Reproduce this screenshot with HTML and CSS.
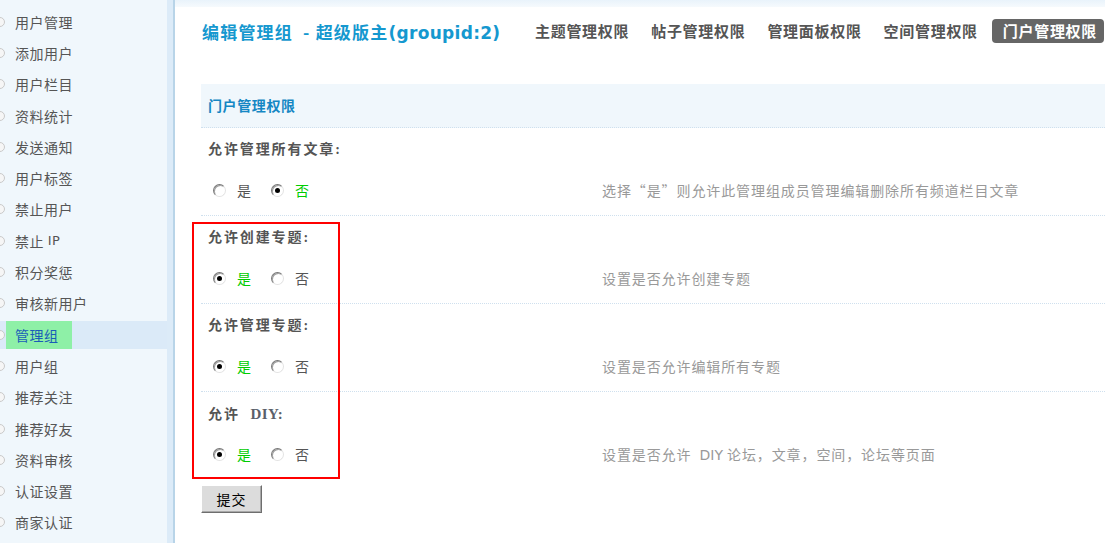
FILE: index.html
```html
<!DOCTYPE html>
<html lang="zh-CN">
<head>
<meta charset="utf-8">
<title>编辑管理组</title>
<link rel="stylesheet" href="styles.css">
</head>
<body>
<div class="page">
  <aside class="sidebar">
    <ul class="menu">
      <li class="item"><a class="link"><span class="label">用户管理</span></a></li>
      <li class="item"><a class="link"><span class="label">添加用户</span></a></li>
      <li class="item"><a class="link"><span class="label">用户栏目</span></a></li>
      <li class="item"><a class="link"><span class="label">资料统计</span></a></li>
      <li class="item"><a class="link"><span class="label">发送通知</span></a></li>
      <li class="item"><a class="link"><span class="label">用户标签</span></a></li>
      <li class="item"><a class="link"><span class="label">禁止用户</span></a></li>
      <li class="item"><a class="link"><span class="label">禁止 <span class="lat">IP</span></span></a></li>
      <li class="item"><a class="link"><span class="label">积分奖惩</span></a></li>
      <li class="item"><a class="link"><span class="label">审核新用户</span></a></li>
      <li class="item active"><a class="link"><span class="label">管理组</span></a></li>
      <li class="item"><a class="link"><span class="label">用户组</span></a></li>
      <li class="item"><a class="link"><span class="label">推荐关注</span></a></li>
      <li class="item"><a class="link"><span class="label">推荐好友</span></a></li>
      <li class="item"><a class="link"><span class="label">资料审核</span></a></li>
      <li class="item"><a class="link"><span class="label">认证设置</span></a></li>
      <li class="item"><a class="link"><span class="label">商家认证</span></a></li>
    </ul>
  </aside>
  <div class="edge"></div>
  <main class="main">
    <div class="topstrip"></div>
    <div class="content">
      <header class="header">
        <h1 class="title">编辑管理组 &nbsp;-&nbsp;超级版主<span class="gid">(groupid:2)</span></h1>
        <nav class="tabs">
          <span class="tab">主题管理权限</span>
          <span class="tab">帖子管理权限</span>
          <span class="tab">管理面板权限</span>
          <span class="tab">空间管理权限</span>
          <span class="tab current">门户管理权限</span>
        </nav>
      </header>

      <div class="section-head">门户管理权限</div>

      <form class="form">
        <div class="setting">
          <div class="setting-label">允许管理所有文章:</div>
          <div class="setting-row">
            <div class="choices">
              <span class="choice"><span class="radio"></span><span class="opt">是</span></span>
              <span class="choice"><span class="radio checked"></span><span class="opt on">否</span></span>
            </div>
            <div class="desc">选择“是”则允许此管理组成员管理编辑删除所有频道栏目文章</div>
          </div>
        </div>
        <div class="setting">
          <div class="setting-label">允许创建专题:</div>
          <div class="setting-row">
            <div class="choices">
              <span class="choice"><span class="radio checked"></span><span class="opt on">是</span></span>
              <span class="choice"><span class="radio"></span><span class="opt">否</span></span>
            </div>
            <div class="desc">设置是否允许创建专题</div>
          </div>
        </div>
        <div class="setting">
          <div class="setting-label">允许管理专题:</div>
          <div class="setting-row">
            <div class="choices">
              <span class="choice"><span class="radio checked"></span><span class="opt on">是</span></span>
              <span class="choice"><span class="radio"></span><span class="opt">否</span></span>
            </div>
            <div class="desc">设置是否允许编辑所有专题</div>
          </div>
        </div>
        <div class="setting last">
          <div class="setting-label">允许 &nbsp;<span class="tight">DIY:</span></div>
          <div class="setting-row">
            <div class="choices">
              <span class="choice"><span class="radio checked"></span><span class="opt on">是</span></span>
              <span class="choice"><span class="radio"></span><span class="opt">否</span></span>
            </div>
            <div class="desc">设置是否允许 &nbsp;<span class="lat">DIY</span> 论坛，文章，空间，论坛等页面</div>
          </div>
        </div>
        <div class="highlight-box"></div>
        <button type="button" class="submit">提交</button>
      </form>
    </div>
  </main>
</div>
</body>
</html>
```

FILE: styles.css
```css
* { box-sizing: border-box; }
html, body {
  margin: 0;
  padding: 0;
  background: #fff;
  font-family: "Noto Sans CJK SC", "DejaVu Sans", sans-serif;
  font-size: 14px;
  color: #555;
  overflow: hidden;
}
.page {
  display: flex;
  width: 1105px;
  height: 543px;
}

/* Sidebar */
.sidebar {
  width: 167px;
  flex: none;
  background: #f0f7fc;
  padding-top: 6px;
}
.menu {
  list-style: none;
  margin: 0;
  padding: 0;
}
.item {
  height: 31.3px;
  display: flex;
  align-items: center;
}
.link {
  display: flex;
  align-items: center;
  width: 100%;
  height: 28px;
  color: #555;
}
.link::before {
  content: "";
  flex: none;
  width: 8px;
  height: 8px;
  margin-left: -5px;
  border: 1px solid #c9c9c9;
  border-radius: 50%;
  background: #f6f6f6;
}
.label {
  display: flex;
  align-items: center;
  height: 28px;
  margin-left: 1px;
  padding: 0 13px 0 9px;
  letter-spacing: 0.5px;
  white-space: pre;
}
.lat { font-family: "DejaVu Sans", sans-serif; font-size: 13px; }
.item.active .link { background: #dbeaf8; }
.item.active .label {
  background: #8ef0a7;
  color: #1a5cb8;
}

.edge {
  width: 8px;
  flex: none;
  background: #dcebf8;
  border-right: 2px solid #b8d4e8;
}

/* Main */
.main {
  flex: 1;
  min-width: 0;
}
.topstrip {
  height: 7px;
  background: linear-gradient(#e9f3fb, #f6fafd);
}
.content {
  padding-left: 26px;
}
.header {
  display: flex;
  align-items: center;
  height: 24px;
  margin-top: 12px;
  margin-bottom: 41px;
}
.title {
  margin: 0;
  font-size: 17px;
  font-weight: bold;
  color: #1598cf;
  letter-spacing: 1.2px;
  white-space: nowrap;
  padding-left: 1px;
}
.gid {
  font-family: "DejaVu Sans", sans-serif;
  letter-spacing: 0.3px;
}
.tabs {
  display: flex;
  align-items: center;
  margin-left: auto;
  margin-right: 1px;
}
.tab {
  font-size: 15px;
  font-weight: bold;
  letter-spacing: 0.7px;
  color: #555;
  margin-left: 22px;
  line-height: 24px;
  white-space: nowrap;
}
.tab.current {
  background: #666;
  color: #fff;
  border-radius: 4px;
  padding: 0 7px 0 11px;
  margin-left: 14px;
}

.section-head {
  height: 44px;
  line-height: 43px;
  background: #f0f7fc;
  border-bottom: 1px dotted #cfe0ee;
  padding-left: 7px;
  font-size: 14px;
  font-weight: bold;
  color: #1587c4;
  letter-spacing: 0.6px;
}

.form {
  position: relative;
}
.setting {
  border-bottom: 1px dotted #cfe0ee;
}
.setting.last { border-bottom: none; }
.setting-label {
  height: 44px;
  line-height: 44px;
  padding-left: 7px;
  font-family: "Liberation Serif", "Noto Sans CJK SC", serif;
  font-weight: bold;
  font-size: 14px;
  color: #555;
  letter-spacing: 1.9px;
  white-space: pre;
}
.tight {
  font-size: 15px;
  letter-spacing: 0.3px;
  color: #5a5f6a;
}
.setting-row {
  display: flex;
  height: 43px;
  padding-top: 8px;
  line-height: 20px;
}
.choices {
  width: 401px;
  flex: none;
  display: flex;
  align-items: center;
  height: 20px;
  padding-left: 12px;
}
.choice {
  display: flex;
  align-items: center;
  width: 58px;
}
.radio {
  width: 13px;
  height: 13px;
  border-radius: 50%;
  background: #fff;
  border: 1px solid;
  border-color: #777 #e3e3e3 #e3e3e3 #777;
  box-shadow: inset 1px 1px 0 #a0a0a0;
  position: relative;
  flex: none;
}
.radio.checked::after {
  content: "";
  position: absolute;
  left: 3px;
  top: 3px;
  width: 5px;
  height: 5px;
  border-radius: 50%;
  background: #000;
}
.opt {
  margin-left: 11px;
  color: #555;
}
.opt.on { color: #00cc00; }
.desc {
  color: #999;
  letter-spacing: 0.9px;
  white-space: pre;
}
.desc .lat { font-size: 14px; letter-spacing: 0; }

.highlight-box {
  position: absolute;
  left: -9px;
  top: 94px;
  width: 148px;
  height: 257px;
  border: 2px solid #ff0000;
  pointer-events: none;
}

.submit {
  display: block;
  margin-top: 6px;
  width: 61px;
  height: 28px;
  padding: 0;
  background: #dcdcdc;
  border: 1px solid;
  border-color: #fff #6e6e6e #6e6e6e #fff;
  box-shadow: inset -1px -1px 0 #a8a8a8;
  font-family: "Noto Sans CJK SC", sans-serif;
  font-size: 14px;
  color: #000;
  letter-spacing: 1px;
}
```
